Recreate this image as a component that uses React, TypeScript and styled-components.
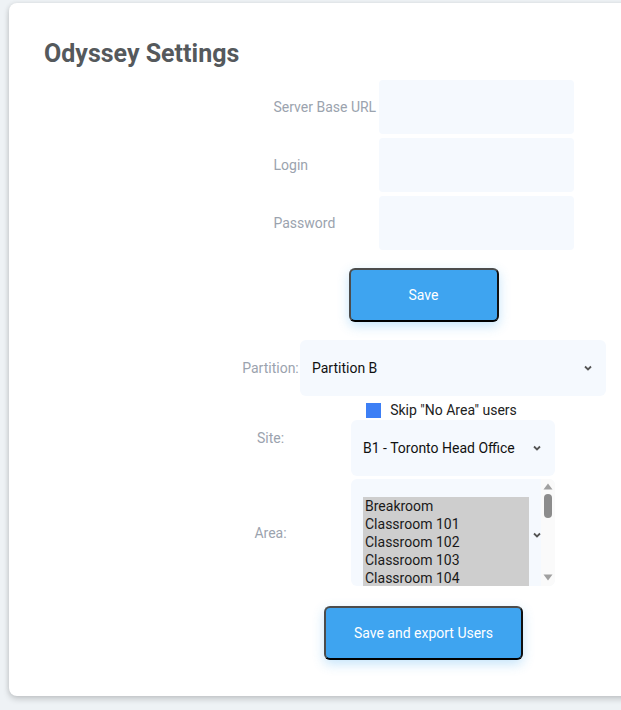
import React from 'react';
import styled, { createGlobalStyle } from 'styled-components';

const GlobalStyle = createGlobalStyle`
    html, body {
        margin: 0;
        padding: 0;
        background: #eef2f5;
        font-family: Roboto, "Liberation Sans", sans-serif;
        overflow: hidden;
    }
`;

const Page = styled.div`
    width: 621px;
    height: 710px;
    overflow: hidden;
    padding: 3px 0 0 9px;
    box-sizing: border-box;
`;

const Card = styled.div`
    width: 829px;
    box-sizing: border-box;
    background: white;
    border-radius: 8px;
    box-shadow: 0 3px 6px rgba(0, 0, 0, 0.18), -1px 0 4px rgba(0, 0, 0, 0.06);
    padding: 36px 35px;
    display: flex;
    flex-direction: column;
`;

const Heading = styled.h1`
    margin: 0 0 11px;
    font-size: 25px;
    line-height: 30px;
    font-weight: 700;
    color: #55595c;
`;

const CredentialsGrid = styled.div`
    display: grid;
    grid-template-columns: 104px 195px;
    column-gap: 1px;
    row-gap: 4px;
    justify-content: center;
    align-items: center;
`;

const Label = styled.label<{ $center?: boolean }>`
    font-size: 14px;
    color: #9ba3ae;
    text-align: ${props => (props.$center ? 'center' : 'left')};
    white-space: nowrap;
`;

const TextInput = styled.input`
    height: 54px;
    box-sizing: border-box;
    border: none;
    border-radius: 4px;
    background: #f5f9fe;
    padding: 0 12px;
    font-family: inherit;
    font-size: 14px;
    outline: none;
`;

const Button = styled.button<{ $width: number }>`
    align-self: center;
    width: ${props => props.$width}px;
    height: 54px;
    margin-top: ${props => (props.$width > 160 ? '20px' : '18px')};
    box-sizing: border-box;
    background: #3ea4f0;
    color: white;
    font-family: inherit;
    font-size: 14px;
    border: 2px solid;
    border-color: #4c4c4c #111 #000 #4c4c4c;
    border-radius: 6px;
    box-shadow: 0 4px 12px rgba(62, 164, 240, 0.3);
    cursor: pointer;
`;

const SelectionGrid = styled.div`
    display: grid;
    grid-template-columns: 59px 306px;
    row-gap: 3px;
    justify-content: center;
    align-items: center;
    margin-top: 18px;
`;

const ControlCell = styled.div`
    display: flex;
    flex-direction: column;
    align-items: center;
`;

const SelectBox = styled.div<{ $width: number }>`
    width: ${props => props.$width}px;
    height: 56px;
    box-sizing: border-box;
    display: flex;
    align-items: center;
    justify-content: space-between;
    padding: 0 14px 0 12px;
    background: #f5f9fe;
    border-radius: 6px;
    font-size: 14px;
    color: #111;
`;

const CheckRow = styled.label`
    height: 21px;
    display: flex;
    align-items: center;
    gap: 9px;
    padding-right: 23px;
    font-size: 14px;
    color: #222;
`;

const CheckSquare = styled.span`
    width: 15px;
    height: 15px;
    background: #3d7ff5;
    margin-top: 2px;
`;

const ListBox = styled.div`
    width: 204px;
    height: 107px;
    display: flex;
    background: #f5f9fe;
    border-radius: 6px;
    overflow: hidden;
`;

const ListItems = styled.div`
    flex: 0 0 166px;
    margin: 18px 0 0 12px;
    background: #cecece;
    font-size: 14px;
    line-height: 18px;
    color: #1a1a1a;
    padding-left: 2px;
    box-sizing: border-box;
`;

const ChevronSlot = styled.div`
    flex: 0 0 12px;
    display: flex;
    align-items: center;
    justify-content: flex-end;
    padding-top: 4px;
`;

const Scrollbar = styled.div`
    flex: 0 0 14px;
    margin-left: auto;
    background: #fafafa;
    display: flex;
    flex-direction: column;
    align-items: center;
    padding: 4px 0 5px;
    box-sizing: border-box;
`;

const Thumb = styled.div`
    width: 8px;
    height: 24px;
    border-radius: 4px;
    background: #8c8c8c;
    margin-top: 4px;
    margin-bottom: auto;
`;

const Chevron = () => (
    <svg width="8" height="6" viewBox="0 0 8 6">
        <path d="M1 1.5 L4 4.5 L7 1.5" fill="none" stroke="#555" strokeWidth="1.8" />
    </svg>
);

const Arrow: React.FC<{ up?: boolean }> = ({ up }) => (
    <svg width="10" height="7" viewBox="0 0 10 7">
        <path d={up ? 'M5 0.5 L9.5 6.5 L0.5 6.5 Z' : 'M0.5 0.5 L9.5 0.5 L5 6.5 Z'} fill="#a0a0a0" />
    </svg>
);

const areas = ['Breakroom', 'Classroom 101', 'Classroom 102', 'Classroom 103', 'Classroom 104'];

const App: React.FC = () => {
    return (
        <Page>
            <GlobalStyle />
            <Card>
                <Heading>Odyssey Settings</Heading>
                <CredentialsGrid>
                    <Label>Server Base URL</Label>
                    <TextInput />
                    <Label>Login</Label>
                    <TextInput />
                    <Label>Password</Label>
                    <TextInput type="password" />
                </CredentialsGrid>
                <Button $width={150}>Save</Button>
                <SelectionGrid>
                    <Label $center>Partition:</Label>
                    <SelectBox $width={306}>
                        <span>Partition B</span>
                        <Chevron />
                    </SelectBox>
                    <Label $center>Site:</Label>
                    <ControlCell>
                        <CheckRow>
                            <CheckSquare />
                            Skip "No Area" users
                        </CheckRow>
                        <SelectBox $width={204}>
                            <span>B1 - Toronto Head Office</span>
                            <Chevron />
                        </SelectBox>
                    </ControlCell>
                    <Label $center>Area:</Label>
                    <ControlCell>
                        <ListBox>
                            <ListItems>
                                {areas.map(area => (
                                    <div key={area}>{area}</div>
                                ))}
                            </ListItems>
                            <ChevronSlot>
                                <Chevron />
                            </ChevronSlot>
                            <Scrollbar>
                                <Arrow up />
                                <Thumb />
                                <Arrow />
                            </Scrollbar>
                        </ListBox>
                    </ControlCell>
                </SelectionGrid>
                <Button $width={199}>Save and export Users</Button>
            </Card>
        </Page>
    );
};

export default App;
